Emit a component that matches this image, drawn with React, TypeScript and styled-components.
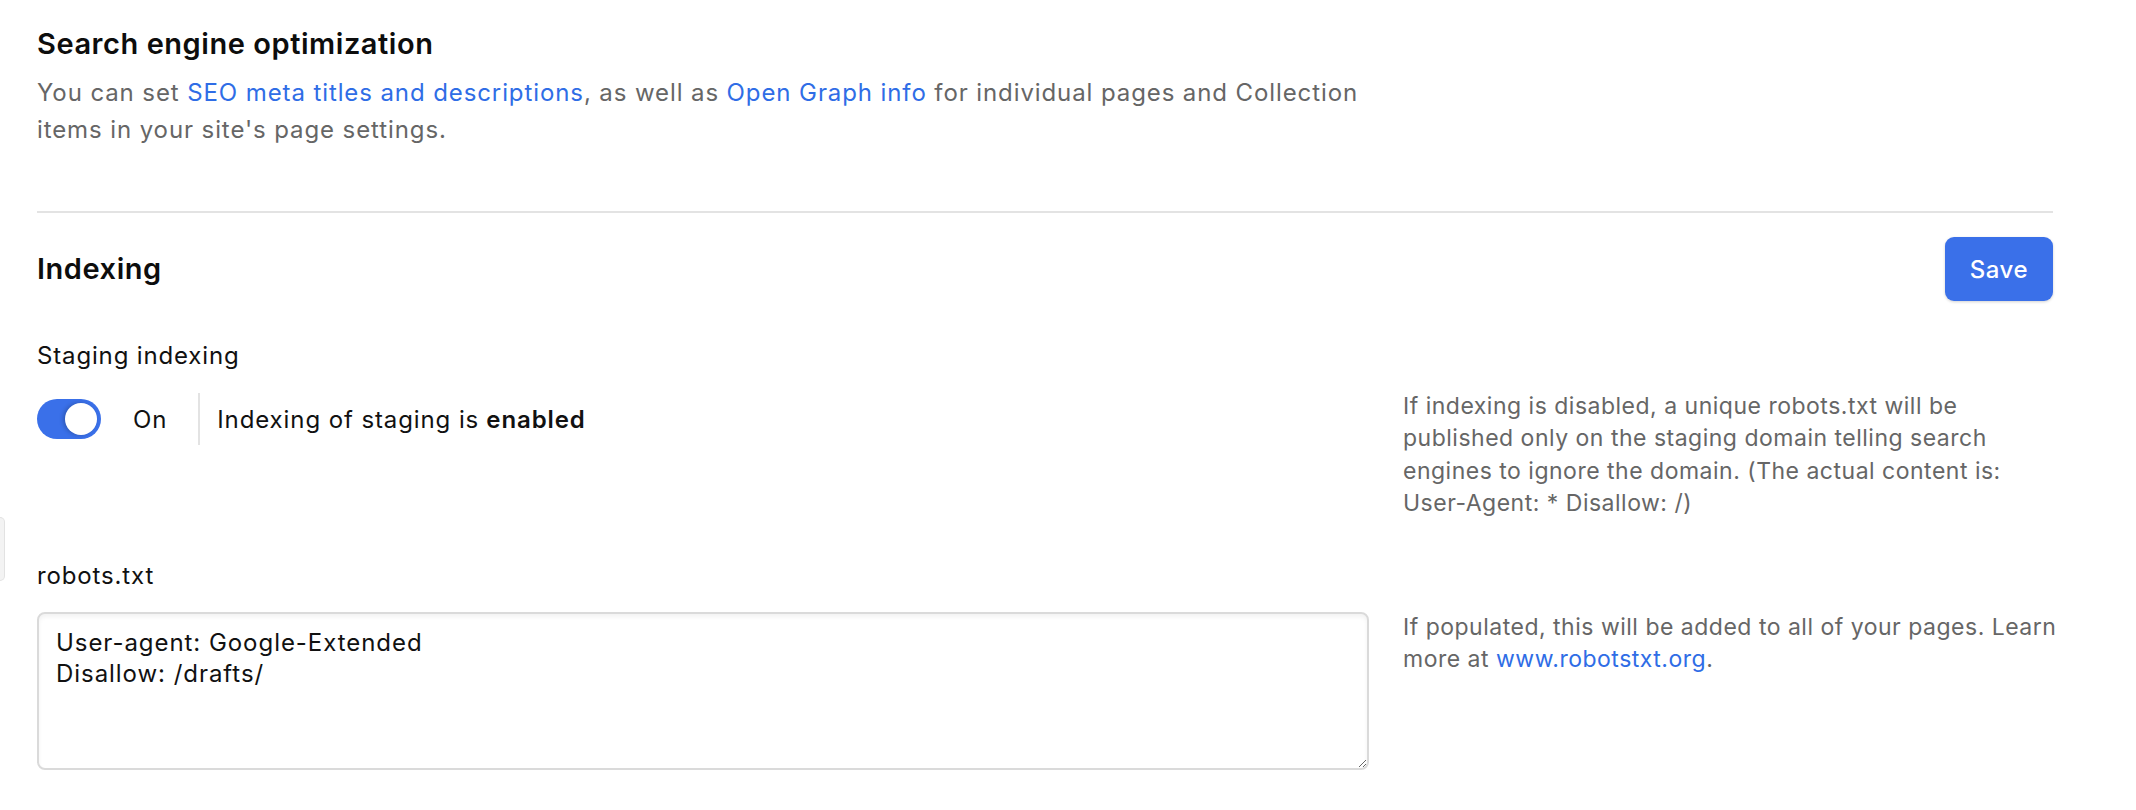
import styled, { createGlobalStyle } from 'styled-components';

const GlobalStyle = createGlobalStyle`
  html, body {
    margin: 0;
    padding: 0;
    background: #ffffff;
  }
  body {
    font-family: Inter, "Noto Sans", "Liberation Sans", sans-serif;
    color: #111111;
    -webkit-font-smoothing: antialiased;
  }
`;

const Page = styled.div`
  position: relative;
  padding: 25px 0 0 37px;
  width: 2016px;
`;

const SideHandle = styled.div`
  position: absolute;
  left: 0;
  top: 517px;
  width: 4px;
  height: 62px;
  background: #f3f3f3;
  border: 1px solid #e2e2e2;
  border-left: none;
  border-radius: 0 6px 6px 0;
`;

const SectionTitle = styled.h2`
  margin: 0;
  font-size: 29px;
  line-height: 38px;
  font-weight: 600;
  color: #0d0d0d;
  letter-spacing: 0.55px;
`;

const Intro = styled.p`
  margin: 11px 0 0;
  max-width: 1345px;
  font-size: 24px;
  line-height: 37px;
  letter-spacing: 0.9px;
  color: #666666;
`;

const Link = styled.a`
  color: #2f6de6;
  text-decoration: none;
  cursor: pointer;
`;

const Divider = styled.hr`
  margin: 63px 0 0;
  border: none;
  height: 2px;
  background: #e3e3e3;
`;

const HeaderRow = styled.div`
  display: flex;
  align-items: center;
  justify-content: space-between;
  margin-top: 24px;
`;

const SaveButton = styled.button`
  height: 64px;
  padding: 0 25px;
  border: none;
  border-radius: 9px;
  background: #3a70e9;
  color: #ffffff;
  font-family: inherit;
  font-size: 24px;
  font-weight: 500;
  letter-spacing: 0.5px;
  box-shadow: 0 1px 3px rgba(0, 0, 0, 0.18);
  cursor: pointer;
`;

const Field = styled.div<{ $top: number }>`
  margin-top: ${(p) => p.$top}px;
`;

const FieldLabel = styled.div`
  font-size: 24px;
  line-height: 36px;
  letter-spacing: 0.85px;
  color: #111111;
`;

const FieldGrid = styled.div<{ $top: number }>`
  display: grid;
  grid-template-columns: 1332px 660px;
  column-gap: 34px;
  align-items: start;
  margin-top: ${(p) => p.$top}px;
`;

const Help = styled.div`
  font-size: 23px;
  line-height: 32.3px;
  letter-spacing: 0.5px;
  color: #666666;
`;

const ToggleRow = styled.div`
  display: flex;
  align-items: center;
  height: 52px;
  margin-top: 3px;
`;

const Track = styled.div<{ $on: boolean }>`
  position: relative;
  width: 64px;
  height: 40px;
  border-radius: 20px;
  background: ${(p) => (p.$on ? '#3a70e9' : '#d0d0d0')};
  flex-shrink: 0;
`;

const Knob = styled.div<{ $on: boolean }>`
  position: absolute;
  top: 4px;
  ${(p) => (p.$on ? 'right: 4px;' : 'left: 4px;')}
  width: 32px;
  height: 32px;
  border-radius: 50%;
  background: #ffffff;
  box-shadow: -2px 0 4px rgba(0, 0, 0, 0.22);
`;

const ToggleText = styled.span`
  margin-left: 32px;
  padding-right: 31px;
  font-size: 24px;
  letter-spacing: 0.85px;
  color: #111111;
`;

const Status = styled.div`
  display: flex;
  align-items: center;
  align-self: stretch;
  padding-left: 17px;
  border-left: 2px solid #e3e3e3;
  font-size: 24px;
  letter-spacing: 0.9px;
  color: #111111;

  b {
    font-weight: 600;
    margin-left: 0.3em;
  }
`;

const RobotsArea = styled.textarea`
  box-sizing: border-box;
  display: block;
  width: 1332px;
  height: 158px;
  margin-top: 1px;
  padding: 13px 17px;
  border: 2px solid #dadada;
  border-radius: 8px;
  box-shadow: inset 0 3px 4px rgba(0, 0, 0, 0.05);
  font-family: inherit;
  font-size: 24px;
  line-height: 31px;
  letter-spacing: 0.95px;
  color: #111111;
  resize: vertical;
  outline: none;
`;

export default function App() {
  return (
    <>
      <GlobalStyle />
      <Page>
        <SideHandle />
        <SectionTitle>Search engine optimization</SectionTitle>
        <Intro>
          You can set <Link>SEO meta titles and descriptions</Link>, as well as{' '}
          <Link>Open Graph info</Link> for individual pages and Collection items in your
          site's page settings.
        </Intro>

        <Divider />

        <HeaderRow>
          <SectionTitle>Indexing</SectionTitle>
          <SaveButton>Save</SaveButton>
        </HeaderRow>

        <Field $top={37}>
          <FieldLabel>Staging indexing</FieldLabel>
          <FieldGrid $top={16}>
            <ToggleRow>
              <Track $on>
                <Knob $on />
              </Track>
              <ToggleText>On</ToggleText>
              <Status>
                Indexing of staging is<b>enabled</b>
              </Status>
            </ToggleRow>
            <Help>
              If indexing is disabled, a unique robots.txt will be published only on the
              staging domain telling search engines to ignore the domain. (The actual
              content is: User-Agent: * Disallow: /)
            </Help>
          </FieldGrid>
        </Field>

        <Field $top={39}>
          <FieldLabel>robots.txt</FieldLabel>
          <FieldGrid $top={17}>
            <RobotsArea
              defaultValue={'User-agent: Google-Extended\nDisallow: /drafts/'}
              spellCheck={false}
            />
            <Help>
              If populated, this will be added to all of your pages. Learn more at{' '}
              <Link>www.robotstxt.org</Link>.
            </Help>
          </FieldGrid>
        </Field>
      </Page>
    </>
  );
}
